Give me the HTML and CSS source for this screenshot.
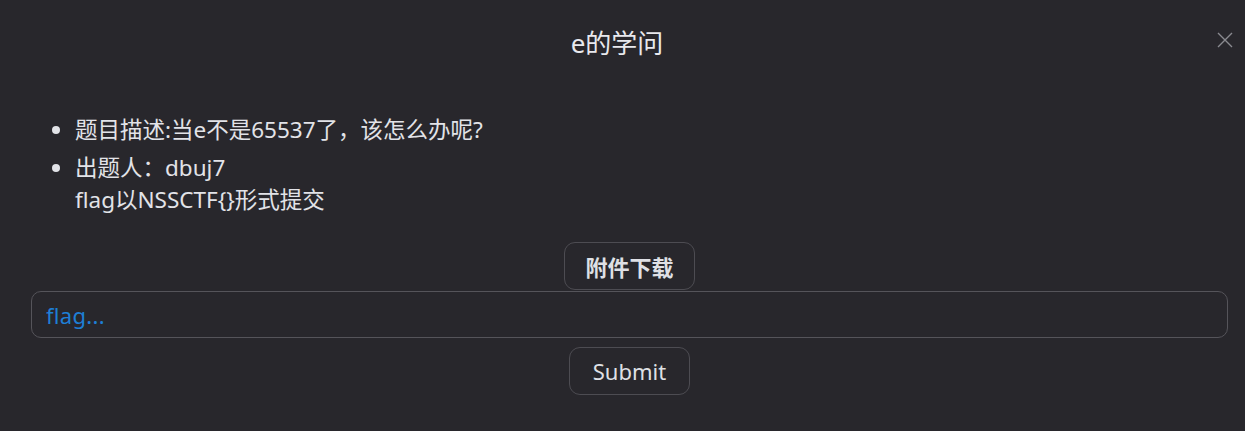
FILE: index.html
```html
<!DOCTYPE html>
<html lang="zh">
<head>
  <meta charset="UTF-8" />
  <meta name="viewport" content="width=device-width, initial-scale=1.0" />
  <title>e的学问</title>
  <link rel="stylesheet" href="styles.css">
</head>
<body>
  <div class="modal">
    <div class="modal-head">
      <h2 class="modal-title">e的学问</h2>
      <button class="close-btn" aria-label="close">
        <svg width="16" height="16" viewBox="0 0 16 16"><path d="M1 1L15 15M15 1L1 15" stroke="#8a8a90" stroke-width="1.4" fill="none"/></svg>
      </button>
    </div>

    <ul class="desc">
      <li>题目描述:当e不是65537了，该怎么办呢?</li>
      <li>出题人：dbuj7<br>flag以NSSCTF{}形式提交</li>
    </ul>

    <div class="center">
      <button class="btn btn-bold">附件下载</button>
    </div>
    <input class="flag-input" type="text" placeholder="flag..." />
    <div class="center">
      <button class="btn">Submit</button>
    </div>
  </div>
</body>
</html>
```

FILE: styles.css
```css
body { margin: 0; background: #28272c; color: #e2e3e8; font-family: "Noto Sans", "Noto Sans CJK SC", sans-serif; }
.modal { padding: 0 17px 0 31px; }
.modal-head { display: flex; justify-content: center; align-items: center; height: 83px; padding-right: 25px; position: relative; }
.modal-title { margin: 0; font-size: 26px; font-weight: 400; color: #e8e9ee; }
.close-btn { position: absolute; right: -5px; top: 32px; background: none; border: none; padding: 0; cursor: pointer; }
.desc { margin: 31px 0 26px 0; padding-left: 44px; font-size: 22.5px; line-height: 32px; }
.desc li { margin-bottom: 6px; }
.center { display: flex; justify-content: center; }
.btn { height: 48px; padding: 0 23px; background: #28272c; color: #dfe0e5; border: 1px solid #4d4c52; border-radius: 11px; font-family: inherit; font-size: 22px; cursor: pointer; }
.btn-bold { font-weight: 700; padding: 0 20px; }
.flag-input { display: block; box-sizing: border-box; width: 100%; height: 47px; margin: 1px 0 9px 0; padding: 0 14px; background: #28272c; border: 1px solid #55545a; border-radius: 10px; font-family: inherit; font-size: 22px; color: #dfe0e5; outline: none; letter-spacing: 0.3px; }
.flag-input::placeholder { color: #1e7fd6; }
```
